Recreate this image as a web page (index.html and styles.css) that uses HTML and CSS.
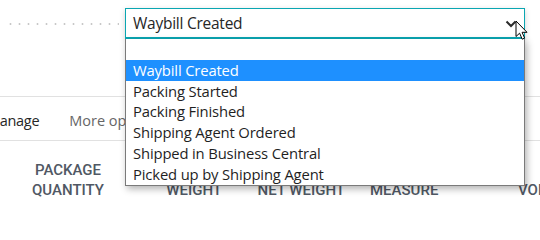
FILE: index.html
```html
<!DOCTYPE html>
<html>
<head>
<meta charset="utf-8">
<link rel="stylesheet" href="styles.css">
</head>
<body>
<div class="page">
  <div class="field-row">
    <div class="leader"></div>
    <div class="select-wrap">
      <div class="select">
        <span class="select-value">Waybill Created</span>
        <svg class="chevron" width="12" height="8" viewBox="0 0 12 8"><polyline points="1.5,1.5 6,6 10.5,1.5" fill="none" stroke="#2b2b2b" stroke-width="2"/></svg>
      </div>
      <ul class="listbox">
        <li class="opt empty"></li>
        <li class="opt selected">Waybill Created</li>
        <li class="opt">Packing Started</li>
        <li class="opt">Packing Finished</li>
        <li class="opt">Shipping Agent Ordered</li>
        <li class="opt">Shipped in Business Central</li>
        <li class="opt">Picked up by Shipping Agent</li>
      </ul>
      <svg class="cursor" width="14" height="21" viewBox="0 0 14 21"><path d="M1 1 L1 16.5 L4.6 13.2 L7.2 19.2 L9.6 18.1 L7.1 12.3 L12 12.3 Z" fill="#fff" stroke="#000" stroke-width="1" stroke-linejoin="round"/></svg>
    </div>
  </div>
  <div class="toolbar">
    <span class="tb-item clipped">Manage</span>
    <span class="tb-item muted">More options</span>
  </div>
  <div class="headers">
    <div class="col c1">PACKAGE<br>QUANTITY</div>
    <div class="col c2">WEIGHT</div>
    <div class="col c3">NET WEIGHT</div>
    <div class="col c4">MEASURE</div>
    <div class="col c5">VOLUME</div>
  </div>
</div>
</body>
</html>
```
FILE: styles.css
```css
html, body {
  margin: 0;
  padding: 0;
  background: #fff;
  overflow: hidden;
}
.page {
  width: 540px;
  height: 200px;
  overflow: hidden;
  font-family: "Open Sans", "Noto Sans", sans-serif;
  color: #212121;
}
.field-row {
  display: flex;
  align-items: flex-start;
  height: 97px;
  border-bottom: 1px solid #e1e1e1;
  box-sizing: border-box;
}
.leader {
  margin-top: 23px;
  margin-left: 6px;
  width: 113px;
  height: 2px;
  background-image: radial-gradient(circle, #c8c8c8 0.9px, transparent 1.2px);
  background-size: 9px 2px;
  background-repeat: repeat-x;
}
.select-wrap {
  position: relative;
  margin-top: 8px;
  margin-left: 6px;
  width: 400px;
}
.select {
  height: 31px;
  box-sizing: border-box;
  border: 1px solid #0aa6b2;
  border-bottom-width: 2px;
  display: flex;
  align-items: center;
  justify-content: space-between;
  padding: 0 7px 0 7px;
  background: #fff;
  box-shadow: 0 2px 6px rgba(0,0,0,0.18);
}
.select-value {
  font-size: 15.5px;
  color: #262626;
  letter-spacing: -0.25px;
}
.chevron {
  margin-top: 1px;
}
.listbox {
  position: absolute;
  top: 31px;
  left: 0;
  width: 400px;
  box-sizing: border-box;
  margin: 0;
  padding: 0;
  list-style: none;
  background: #fff;
  border: 1px solid #7a7a7a;
  border-top: none;
  box-shadow: 2px 3px 7px rgba(0,0,0,0.3);
  z-index: 2;
}
.opt {
  height: 20.8px;
  line-height: 20.8px;
  padding-left: 7px;
  font-size: 14.8px;
  color: #1f1f1f;
  letter-spacing: -0.15px;
  white-space: nowrap;
}
.opt.selected {
  background: #1e90ff;
  color: #fff;
}
.cursor {
  position: absolute;
  top: 12px;
  left: 390px;
  z-index: 3;
}
.toolbar {
  display: flex;
  align-items: center;
  height: 44px;
  padding-top: 4px;
  border-bottom: 1px solid #e1e1e1;
  box-sizing: border-box;
  font-size: 14.5px;
  white-space: nowrap;
  overflow: hidden;
}
.tb-item.clipped {
  margin-left: -13px;
  color: #262626;
  letter-spacing: -0.3px;
}
.tb-item.muted {
  margin-left: 30px;
  color: #666;
}
.headers {
  display: grid;
  grid-template-columns: 136px 86px 123px 173px 1fr;
  align-items: end;
  height: 59px;
  box-sizing: border-box;
  font-family: "Roboto", "Noto Sans", sans-serif;
  font-weight: 500;
  font-size: 15px;
  line-height: 19.5px;
  color: #505864;
}
.col {
  white-space: nowrap;
}
.c1 { text-align: center; }
.c2 { text-align: right; }
.c3 { text-align: right; }
.c4 { text-align: left; padding-left: 25px; }
.c5 { text-align: left; }
```
